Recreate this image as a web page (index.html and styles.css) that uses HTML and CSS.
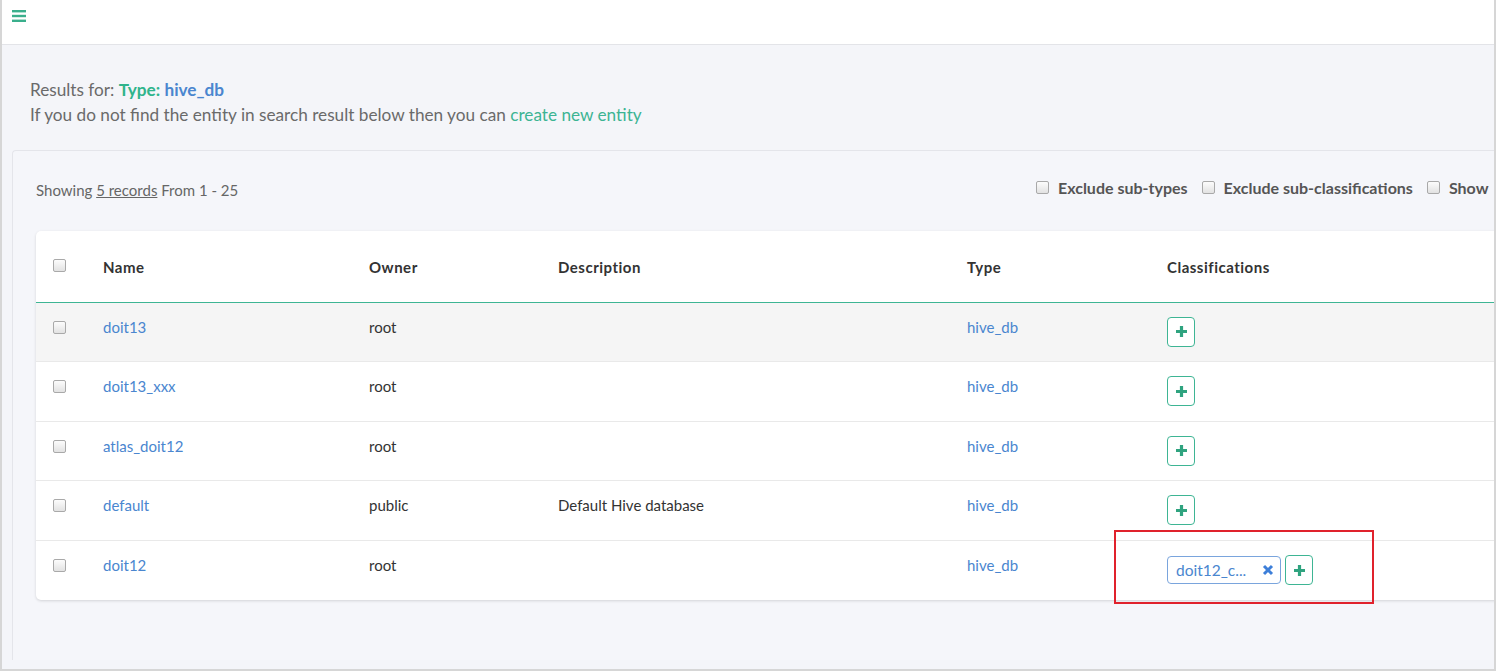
FILE: index.html
```html
<!DOCTYPE html>
<html>
<head>
<meta charset="utf-8">
<link rel="stylesheet" href="styles.css">
</head>
<body>
<div class="frame">
  <header class="topbar">
    <svg class="burger" width="14" height="12" viewBox="0 0 14 12"><rect x="0" y="0" width="14" height="2.4" fill="#3aaf8c"/><rect x="0" y="4.8" width="14" height="2.4" fill="#3aaf8c"/><rect x="0" y="9.6" width="14" height="2.4" fill="#3aaf8c"/></svg>
  </header>
  <main class="content">
    <div class="results">
      <div>Results for: <span class="rtype">Type:</span> <span class="rval">hive_db</span></div>
      <div>If you do not find the entity in search result below then you can <a class="create">create new entity</a></div>
    </div>
    <section class="panel">
      <div class="panel-head">
        <div class="showing">Showing <u>5 records</u> From 1 - 25</div>
        <div class="filters">
          <label class="filter"><span class="cb"></span>Exclude sub-types</label>
          <label class="filter"><span class="cb"></span>Exclude sub-classifications</label>
          <label class="filter"><span class="cb"></span>Show</label>
        </div>
      </div>
      <div class="card">
        <table class="grid">
          <colgroup>
            <col class="c-check"><col class="c-name"><col class="c-owner"><col class="c-desc"><col class="c-type"><col class="c-class">
          </colgroup>
          <thead>
            <tr><th class="chk"><span class="cb"></span></th><th>Name</th><th>Owner</th><th>Description</th><th>Type</th><th>Classifications</th></tr>
          </thead>
          <tbody>
            <tr class="hl"><td class="chk"><span class="cb"></span></td><td><a class="lnk">doit13</a></td><td>root</td><td></td><td><a class="lnk">hive_db</a></td><td class="cls"><span class="addbtn"><svg width="13" height="13" viewBox="0 0 13 13"><path d="M6.5 1v11M1 6.5h11" stroke="#2fa37f" stroke-width="3.2"/></svg></span></td></tr>
            <tr><td class="chk"><span class="cb"></span></td><td><a class="lnk">doit13_xxx</a></td><td>root</td><td></td><td><a class="lnk">hive_db</a></td><td class="cls"><span class="addbtn"><svg width="13" height="13" viewBox="0 0 13 13"><path d="M6.5 1v11M1 6.5h11" stroke="#2fa37f" stroke-width="3.2"/></svg></span></td></tr>
            <tr><td class="chk"><span class="cb"></span></td><td><a class="lnk">atlas_doit12</a></td><td>root</td><td></td><td><a class="lnk">hive_db</a></td><td class="cls"><span class="addbtn"><svg width="13" height="13" viewBox="0 0 13 13"><path d="M6.5 1v11M1 6.5h11" stroke="#2fa37f" stroke-width="3.2"/></svg></span></td></tr>
            <tr><td class="chk"><span class="cb"></span></td><td><a class="lnk">default</a></td><td>public</td><td>Default Hive database</td><td><a class="lnk">hive_db</a></td><td class="cls"><span class="addbtn"><svg width="13" height="13" viewBox="0 0 13 13"><path d="M6.5 1v11M1 6.5h11" stroke="#2fa37f" stroke-width="3.2"/></svg></span></td></tr>
            <tr><td class="chk"><span class="cb"></span></td><td><a class="lnk">doit12</a></td><td>root</td><td></td><td><a class="lnk">hive_db</a></td><td class="cls"><div class="tags"><span class="tag">doit12_c...<svg class="x" width="12" height="12" viewBox="0 0 12 12"><path d="M2 2l8 8M10 2l-8 8" stroke="#3d7fd9" stroke-width="3"/></svg></span><span class="addbtn"><svg width="13" height="13" viewBox="0 0 13 13"><path d="M6.5 1v11M1 6.5h11" stroke="#2fa37f" stroke-width="3.2"/></svg></span></div></td></tr>
          </tbody>
        </table>
      </div>
    </section>
  </main>
  <div class="mark"></div>
</div>
</body>
</html>
```
FILE: styles.css
```css
html, body {
  margin: 0;
  padding: 0;
  width: 1496px;
  height: 672px;
  overflow: hidden;
  background: #fff;
  font-family: Lato, "Open Sans", sans-serif;
  color: #555;
}
.frame {
  position: relative;
  box-sizing: border-box;
  width: 1496px;
  height: 671px;
  border-left: 2px solid #d6d6d6;
  border-right: 2px solid #d6d6d6;
  border-bottom: 2px solid #d6d6d6;
  overflow: hidden;
  display: flex;
  flex-direction: column;
}
.topbar {
  flex: none;
  background: #fff;
  border-bottom: 1px solid #e3e4e8;
  padding: 10px 0 0 10px;
  box-sizing: border-box;
  height: 45px;
}
.burger { display: block; }
.content {
  flex: 1;
  background: #f4f5f9;
  padding: 32px 0 0 10px;
}
.results {
  padding-left: 18px;
  font-size: 17.2px;
  line-height: 25px;
  color: #6a6a6a;
}
.rtype { color: #2fb48c; font-weight: 700; }
.rval { color: #4a86cf; font-weight: 700; }
.create { color: #3cb493; }
.panel {
  margin-top: 23px;
  width: 1560px;
  border-top: 1px solid #e4e5ea;
  border-left: 1px solid #e4e5ea;
  border-radius: 4px 0 0 0;
  background: #f5f6fa;
  padding: 29px 0 60px 23px;
}
.panel-head {
  display: grid;
  grid-template-columns: 1000px auto;
  align-items: center;
  height: 20px;
}
.showing {
  font-size: 15px;
  color: #666;
}
.showing u { text-decoration: underline; }
.filters {
  display: flex;
  gap: 14px;
  margin-top: -6px;
  white-space: nowrap;
}
.filter {
  display: flex;
  align-items: center;
  gap: 9px;
  font-size: 16px;
  font-weight: 700;
  color: #555;
}
.cb {
  display: inline-block;
  box-sizing: border-box;
  width: 13px;
  height: 13px;
  border: 1px solid #a9a9a9;
  border-radius: 2px;
  background: linear-gradient(#fcfcfc, #e2e2e2);
}
.card {
  margin-top: 31px;
  background: #fff;
  border-radius: 5px;
  box-shadow: 0 1px 3px rgba(0,0,0,0.14);
  width: 1520px;
  overflow: hidden;
}
.grid {
  border-collapse: collapse;
  table-layout: fixed;
  width: 100%;
  font-size: 15px;
}
.c-check { width: 52px; }
.c-name { width: 266px; }
.c-owner { width: 189px; }
.c-desc { width: 409px; }
.c-type { width: 200px; }
.grid th {
  height: 71px;
  box-sizing: border-box;
  text-align: left;
  font-size: 15px;
  font-weight: 700;
  color: #333;
  padding: 2px 15px 0;
  border-bottom: 1px solid #3eb594;
  letter-spacing: 0.5px;
}
.grid td {
  height: 59.5px;
  box-sizing: border-box;
  padding: 0 15px 10px;
  border-top: 1px solid #e9e9e9;
  color: #333;
  vertical-align: middle;
}
.grid td.cls { padding: 0 15px; }
.grid tbody tr:first-child td { border-top: none; }
.grid th.chk { padding: 0 0 0 17px; }
.grid td.chk { padding: 0 0 10px 17px; }
.grid th.chk .cb { position: relative; top: 0px; }
.grid td.chk .cb { position: relative; top: 1px; }
.hl td { background: #f5f5f5; }
.lnk { color: #4a86cf; }
.addbtn {
  display: inline-flex;
  align-items: center;
  justify-content: center;
  box-sizing: border-box;
  width: 28px;
  height: 30px;
  border: 1px solid #3eb594;
  border-radius: 4px;
  background: #fff;
  vertical-align: middle;
}
.tags {
  display: flex;
  align-items: center;
  gap: 4px;
}
.tag {
  display: inline-flex;
  align-items: center;
  justify-content: space-between;
  box-sizing: border-box;
  width: 114px;
  height: 28px;
  padding: 0 6px 0 8px;
  border: 1px solid #7aa5dd;
  border-radius: 4px;
  color: #4a86cf;
  font-size: 15.5px;
}
.mark {
  position: absolute;
  left: 1112px;
  top: 530px;
  width: 260px;
  height: 74px;
  box-sizing: border-box;
  border: 2px solid #e0222c;
}
```
